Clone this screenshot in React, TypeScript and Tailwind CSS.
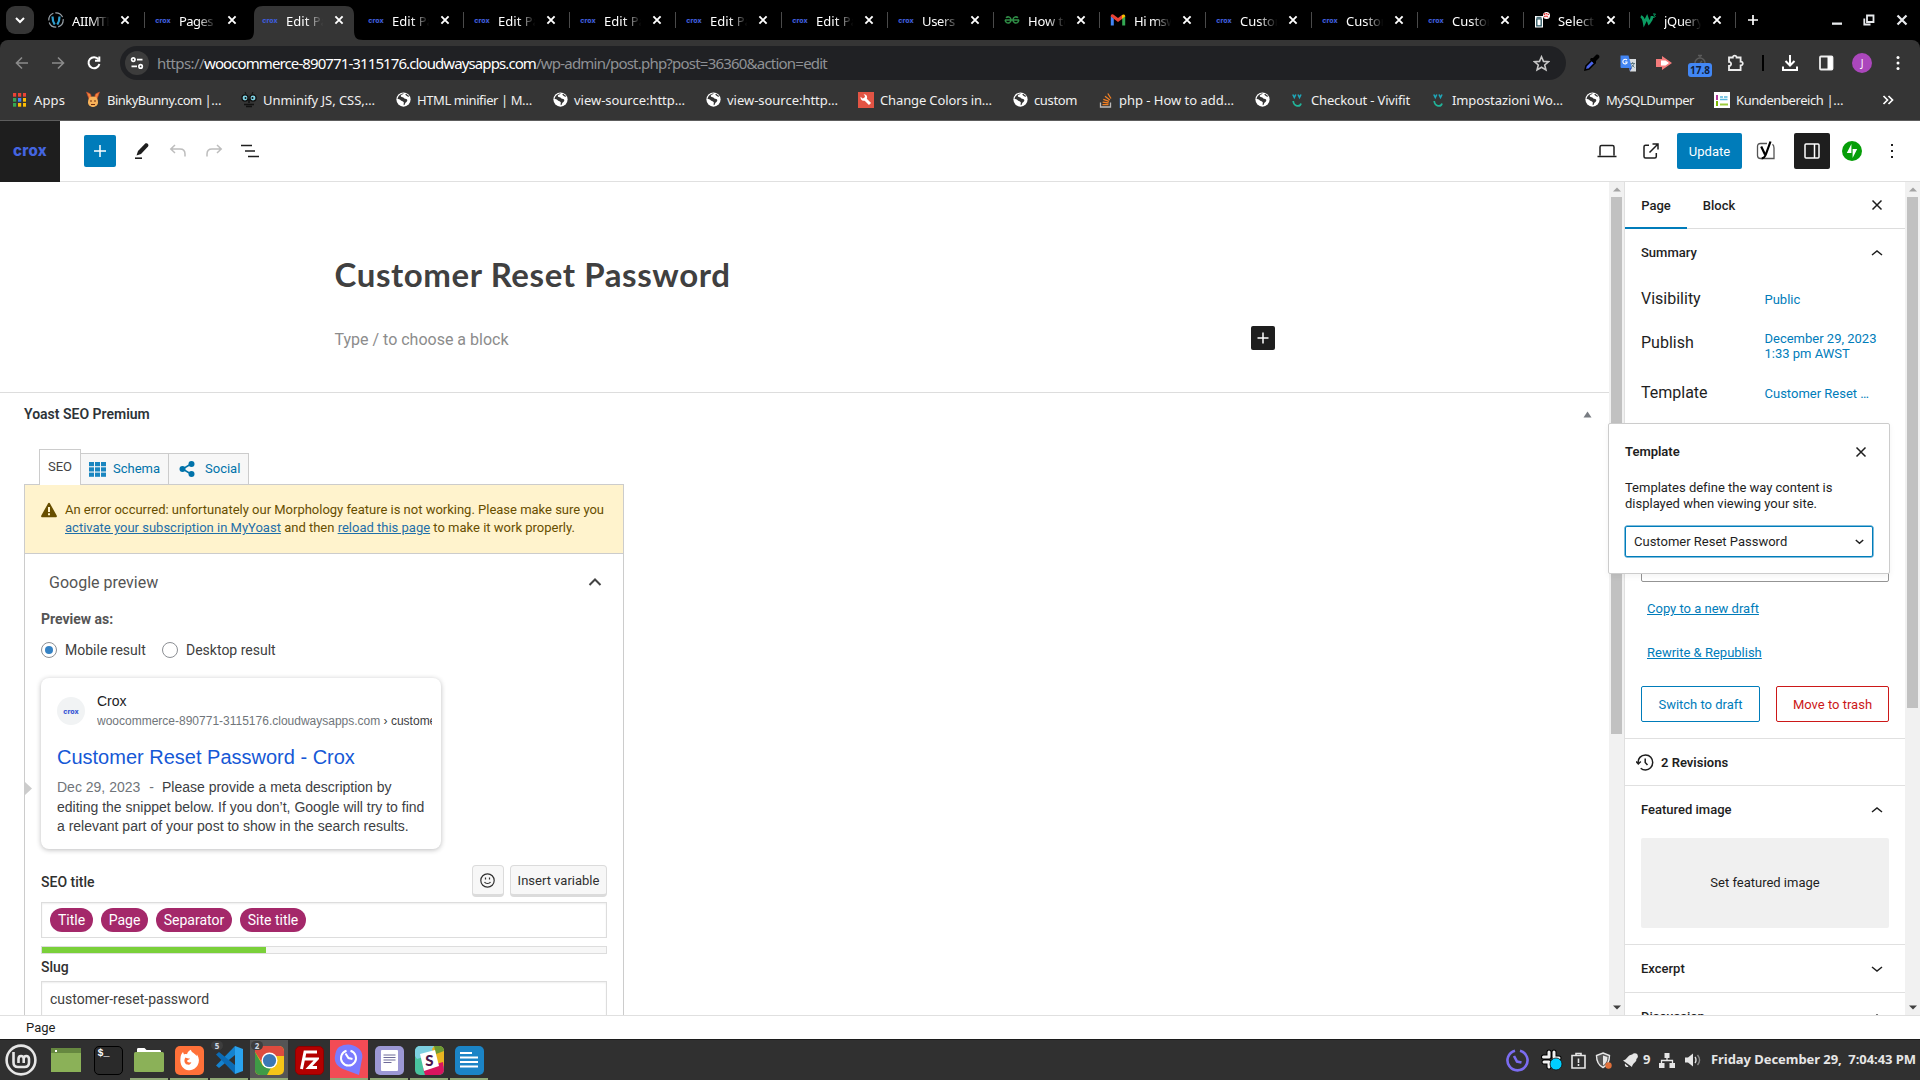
import { useLayoutEffect, useRef, useState } from 'react';
import type { ReactNode } from 'react';

const UI = "font-['Noto_Sans',sans-serif]";

/* Spreads a line of text over a given width by adjusting its letter spacing. */
function Fit({ w, className = '', children }: { w: number; className?: string; children: string }) {
  const ref = useRef<HTMLSpanElement>(null);
  const [ls, setLs] = useState(0);
  useLayoutEffect(() => {
    const measure = () => {
      const el = ref.current;
      if (!el) return;
      el.style.letterSpacing = '0px';
      const v = (w - el.getBoundingClientRect().width) / children.length;
      el.style.letterSpacing = `${v}px`;
      setLs(v);
    };
    measure();
    document.fonts?.ready.then(measure);
  }, [w, children]);
  return (
    <span ref={ref} className={`inline-block shrink-0 whitespace-pre ${className}`} style={{ letterSpacing: `${ls}px` }}>
      {children}
    </span>
  );
}

function Crox({ size = 'sm' }: { size?: 'sm' | 'lg' }) {
  if (size === 'lg')
    return <Fit w={34} className="font-['Inter',sans-serif] text-[15px] leading-none font-extrabold text-[#4465e0]">crox</Fit>;
  return (
    <span className="flex h-4 w-4 items-center justify-center">
      <Fit w={15.500} className="font-['Inter',sans-serif] text-[7px] leading-none font-extrabold text-[#3d5bd6]">crox</Fit>
    </span>
  );
}

function Globe() {
  return (
    <svg width="15" height="15" viewBox="0 0 16 16">
      <circle cx="8" cy="8" r="7.600" fill="#fff" />
      <path d="M8.600 1.600c-1 .8-2.800 1-3.400 2.200-.5 1.200.6 1.700 1.900 1.900 1.400.2 1.200 1.300 2.700 1.500 1.500.2 2.500.8 2.200 2.200-.3 1.500-2 1.700-2.400 3-.2.800-.5 1.500-1.200 1.700-.8-1.100.5-2.500-.3-3.500C7.300 9.700 5.600 9.900 4.700 8.600 4 7.600 2.600 7.500 1.700 7.400 2 4.300 5 1.400 8.600 1.600z" fill="#353535" />
      <path d="M10.500 2.200c.5 1.500 1.700 1.300 3 2.600" stroke="#353535" strokeWidth="1.300" fill="none" />
    </svg>
  );
}

function Close({ className = '' }: { className?: string }) {
  return (
    <svg className={className} width="14" height="14" viewBox="0 0 14 14" stroke="currentColor" strokeWidth="1.900" fill="none">
      <path d="M3.400 3.400l7.200 7.200M10.600 3.400l-7.200 7.200" />
    </svg>
  );
}

function HeadFav() {
  return (
    <svg width="16" height="16" viewBox="0 0 16 16" fill="none">
      <circle cx="8" cy="8" r="7.200" stroke="#9aa3aa" strokeWidth="1.200" strokeDasharray="9 2" />
      <path d="M4.500 4.500c0 3 .3 5.500 2.200 8M11.500 4.500c0 3-.3 5.500-2.200 8" stroke="#2f9fd0" strokeWidth="2.200" />
    </svg>
  );
}
function GeeksFav() {
  return (
    <svg width="16" height="16" viewBox="0 0 16 16" fill="none" stroke="#2f8d46" strokeWidth="1.500">
      <path d="M1 8h14M2 5.800C4 4 7 5 7 8s-3 3.800-4.800 2.200C1.400 9.500 1.200 8.600 1.400 8M14 5.800C12 4 9 5 9 8s3 3.800 4.800 2.200c.8-.7 1-1.600.8-2.200" />
    </svg>
  );
}
function GmailFav() {
  return (
    <svg width="16" height="16" viewBox="0 0 16 16">
      <path d="M.8 4v9.500h3V6.500z" fill="#4285f4" />
      <path d="M15.200 4v9.500h-3V6.500z" fill="#34a853" />
      <path d="M.8 4.300C.8 2.300 2.800 1.900 4 2.900L8 6l4-3.100v4L8 10 .8 4.600z" fill="#ea4335" />
      <path d="M12 2.900c1.300-1 3.200-.5 3.200 1.400v.3L12 7z" fill="#fbbc04" />
    </svg>
  );
}
function SelectFav() {
  return (
    <svg width="17" height="16" viewBox="0 0 17 16">
      <path d="M1 4h8v11.500H1z" fill="#fff" />
      <path d="M2.800 6.800h4.400v7H2.800z" fill="#fff" stroke="#26525e" strokeWidth="1.300" />
      <path d="M2.500 5.300h5" stroke="#26525e" />
      <circle cx="12.500" cy="3.500" r="3.500" fill="#fff" />
      <path d="M10 2.800c1-1.800 3.800-1.500 4.600.2M10.400 5c1-1.400 3.200-1 3.600.5" stroke="#e23030" strokeWidth="1.400" strokeDasharray="1.500 .5" fill="none" />
    </svg>
  );
}
function W3Fav() {
  return (
    <svg width="17" height="16" viewBox="0 0 17 16" fill="none" stroke="#0b9c62">
      <path d="M.8 4.500c2 .5 3 3.500 3.500 6.500L7 5.500l2 5.500c2-2 3-4.500 3.200-7" strokeWidth="2.800" />
      <path d="M13 2h2.500l-1.300 1.600c1.500 0 1.500 2-1.200 1.800" strokeWidth="1" />
    </svg>
  );
}

type Tab = { fav: ReactNode; title: string; w: number; active?: boolean; nosep?: boolean; wide?: boolean };
const tabs: Tab[] = [
  { fav: <HeadFav />, title: 'AIIMTE', w: 41, wide: true },
  { fav: <Crox />, title: 'Pages', w: 34, nosep: true, wide: true },
  { fav: <Crox />, title: 'Edit Pa', w: 42, active: true, nosep: true },
  { fav: <Crox />, title: 'Edit Pa', w: 42 },
  { fav: <Crox />, title: 'Edit Pa', w: 42 },
  { fav: <Crox />, title: 'Edit Pa', w: 42 },
  { fav: <Crox />, title: 'Edit Pa', w: 42 },
  { fav: <Crox />, title: 'Edit Pa', w: 42 },
  { fav: <Crox />, title: 'Users', w: 33 },
  { fav: <GeeksFav />, title: 'How to', w: 43 },
  { fav: <GmailFav />, title: 'Hi msw', w: 42 },
  { fav: <Crox />, title: 'Custom', w: 47 },
  { fav: <Crox />, title: 'Custom', w: 47 },
  { fav: <Crox />, title: 'Custom', w: 47 },
  { fav: <SelectFav />, title: 'Select', w: 36 },
  { fav: <W3Fav />, title: 'jQuery', w: 39 },
];

function TabStrip() {
  return (
    <div className="flex h-10 items-stretch bg-black text-white">
      <div className="flex w-[38px] items-center pt-0 pl-[6px]">
        <div className="flex h-7 w-7 items-center justify-center rounded-[9px] bg-[#353535]">
          <svg width="12" height="12" viewBox="0 0 12 12" fill="none" stroke="#fff" strokeWidth="2"><path d="M2 4l4 4 4-4" /></svg>
        </div>
      </div>
      {tabs.map((t, i) => (
        <div key={i} className={`relative flex shrink-0 items-center pl-[10px] ${t.wide ? 'w-[107px]' : 'w-[106px]'}`}>
          {t.active && (
            <svg className="absolute top-[6px] -left-[7px]" width="118" height="34" viewBox="0 0 118 34">
              <path d="M0 34C7 34 9 31 9 24V9C9 3 12 0 18 0H100C106 0 109 3 109 9V24C109 31 111 34 118 34Z" fill="#353535" />
            </svg>
          )}
          <div className="relative flex w-[24px] items-center">{t.fav}</div>
          <div className="relative w-[38px] overflow-hidden [mask-image:linear-gradient(to_right,#000_50%,transparent_98%)]">
            <Fit w={t.w} className="text-[13px] leading-5">{t.title}</Fit>
          </div>
          <Close className="relative ml-2" />
          {!t.nosep && <span className="absolute top-3 right-0 h-4 w-px bg-[#4a4a4a]" />}
        </div>
      ))}
      <div className="flex flex-1 items-center pl-[11px]">
        <svg width="12" height="12" viewBox="0 0 12 12" stroke="#fff" strokeWidth="1.700"><path d="M6 1v10M1 6h10" /></svg>
      </div>
      <div className="flex items-center pr-[10px] text-[#e8eaed]">
        <svg className="mr-5" width="12" height="12" viewBox="0 0 12 12"><path d="M1 8.500h10v2.300H1z" fill="currentColor" /></svg>
        <svg className="mr-[19px]" width="12" height="12" viewBox="0 0 12 12" fill="none" stroke="currentColor" strokeWidth="1.800"><path d="M4 1.500h6.500V8H4zM1.300 4.500v6H7.500" /></svg>
        <svg width="16" height="16" viewBox="0 0 16 16" stroke="currentColor" strokeWidth="2.200"><path d="M3.500 3.500l9 9M12.500 3.500l-9 9" /></svg>
      </div>
    </div>
  );
}

function Slot({ children }: { children: ReactNode }) {
  return <div className="flex w-9 shrink-0 items-center justify-center">{children}</div>;
}

function Toolbar() {
  return (
    <div className="flex h-[46px] items-center rounded-t-[8px] bg-[#353535] text-white">
      <div className="flex w-[120px] pl-1">
        <Slot><svg width="16" height="16" viewBox="0 0 16 16" fill="none" stroke="#8b8b8b" strokeWidth="1.600"><path d="M14 8H3M8 2.500L2.500 8 8 13.500" /></svg></Slot>
        <Slot><svg width="16" height="16" viewBox="0 0 16 16" fill="none" stroke="#8b8b8b" strokeWidth="1.600"><path d="M2 8h11M8 2.500L13.500 8 8 13.500" /></svg></Slot>
        <Slot><svg width="16" height="16" viewBox="0 0 16 16" fill="none" stroke="#fff" strokeWidth="2"><path d="M12.500 4.500A5.500 5.500 0 1 0 13.400 9" /><path d="M13.300 1.500v4.300H9" /></svg></Slot>
      </div>
      <div className="flex h-[34px] w-[1446px] items-center rounded-full bg-[#202124] pl-[5px]">
        <div className="mr-2 flex h-6 w-6 items-center justify-center rounded-full bg-[#3c3c3c]">
          <svg width="14" height="14" viewBox="0 0 14 14" fill="none" stroke="#fff" strokeWidth="1.700"><circle cx="3.300" cy="3.600" r="1.700" /><path d="M7 3.600h5.500M1.500 10.400H7" /><circle cx="10.600" cy="10.400" r="1.700" /></svg>
        </div>
        <div className="text-[15px] leading-5 text-[#8f9195]">
          <Fit w={47}>https://</Fit>
          <Fit w={332} className="text-white">woocommerce-890771-3115176.cloudwaysapps.com</Fit>
          <Fit w={291}>/wp-admin/post.php?post=36360&action=edit</Fit>
        </div>
        <svg className="mr-4 ml-auto" width="17" height="17" viewBox="0 0 17 17" fill="none" stroke="#c7c7c7" strokeWidth="1.600"><path d="M8.500 1.800l2 4.600 5 .4-3.800 3.200 1.200 4.900-4.400-2.700-4.400 2.700 1.200-4.900L1.500 6.800l5-.4z" /></svg>
      </div>
      <div className="flex pl-[8px]">
        <Slot>
          <svg width="18" height="18" viewBox="0 0 18 18"><path d="M2 16l1-4 6-6 3 3-6 6z" fill="#4a63e6" stroke="#000" strokeWidth="1.500" /><path d="M8 4l2 0 3-3c2-1.500 4.500 1 3 3l-3 3v2l-1.500 1L7 5.500z" fill="#000" /></svg>
        </Slot>
        <Slot>
          <svg width="17" height="17" viewBox="0 0 17 17"><path d="M7 4h9v12.500h-6z" fill="#d8dce0" /><path d="M.5.500h8L12 13H1.500a1 1 0 0 1-1-1z" fill="#4285f4" /><path d="M9 13h3l-2 3z" fill="#2a56c6" /><path d="M7 5.200A2.300 2.300 0 1 0 7 8V7H5" fill="none" stroke="#fff" strokeWidth="1.100" /><path d="M10.500 8.500H15M12.700 7v1.500M14 8.500c-.5 2-1.500 3-3 4M11.500 9.500l3 3" stroke="#5f7a86" fill="none" /></svg>
        </Slot>
        <Slot>
          <svg width="16" height="14" viewBox="0 0 16 14"><path d="M0 3h6V0l10 7-10 7v-3H0z" fill="#f37b7b" /><path d="M5 4.500h4.500L13 7l-3.500 2.500H5z" fill="#fff" /></svg>
        </Slot>
        <Slot>
          <div className="relative h-[18px] w-6">
            <svg className="mx-auto" width="14" height="14" viewBox="0 0 14 14" fill="none" stroke="#5b5b5b" strokeWidth="1.500"><path d="M5 1.500h4M7 1.500v2" /><circle cx="7" cy="9" r="5" /><path d="M7 9l2-2" /></svg>
            <span className="absolute top-[9px] left-0 flex h-[14px] w-6 items-center justify-center rounded-[3px] bg-[#4287f5]"><Fit w={20} className="text-[10px] leading-none font-bold text-[#10203c]">17.8</Fit></span>
          </div>
        </Slot>
        <Slot>
          <svg width="18" height="18" viewBox="0 0 18 18" fill="none" stroke="#eee" strokeWidth="1.800"><path d="M2 3.500h3.800c-.2-2.500 4-2.500 3.800 0h4v4.200c2.900-.2 2.900 3.900 0 3.700v4.600H2v-4c2.800.1 2.800-4.200 0-4.100z" /></svg>
        </Slot>
        <div className="flex w-[18px] items-center justify-center"><span className="h-4 w-[2px] bg-black" /></div>
        <Slot>
          <svg width="18" height="18" viewBox="0 0 18 18" fill="none" stroke="#fff" strokeWidth="2"><path d="M9 1v10M4.500 7L9 11.500 13.500 7M2 12.500V16h14v-3.500" /></svg>
        </Slot>
        <Slot>
          <svg width="16" height="16" viewBox="0 0 16 16" fill="none"><rect x="2" y="1.500" width="12.500" height="13" rx="1" stroke="#eee" strokeWidth="1.800" /><path d="M9.500 1.500h5v13h-5z" fill="#fff" /></svg>
        </Slot>
        <Slot><div className="flex h-5 w-5 items-center justify-center rounded-full bg-[#ab47bc] text-[10px] text-white">J</div></Slot>
        <Slot><svg width="4" height="16" viewBox="0 0 4 16" fill="#fff"><circle cx="2" cy="2.500" r="1.500" /><circle cx="2" cy="8" r="1.500" /><circle cx="2" cy="13.500" r="1.500" /></svg></Slot>
      </div>
    </div>
  );
}

const AppsIcon = (
  <svg width="13" height="14" viewBox="0 0 13 14">
    {['#ea4335', '#ea4335', '#ea4335', '#34a853', '#4285f4', '#fbbc04', '#34a853', '#fbbc04', '#fbbc04'].map((c, i) => (
      <rect key={i} x={(i % 3) * 5} y={Math.floor(i / 3) * 5} width="3.200" height="3.700" fill={c} />
    ))}
  </svg>
);
const Bunny = (
  <svg width="16" height="17" viewBox="0 0 16 17">
    <path d="M1.500 1l4 2 1.500 5H4zM14.500 1l-4 2L9 8h3z" fill="#f4823c" stroke="#c34a2a" strokeWidth=".7" />
    <path d="M8 5.500c4 0 5 3 5 6s-3 4.500-5 4.500-5-1.500-5-4.500 1-6 5-6z" fill="#f7b25a" />
    <path d="M5 10h2M9 10h2M6 13.500h4" stroke="#6d2d10" strokeWidth="1.200" />
  </svg>
);
const Unmin = (
  <svg width="16" height="17" viewBox="0 0 16 17">
    <path d="M4 1l1 2M12 1l-1 2" stroke="#111" />
    <circle cx="4" cy="7" r="3.700" fill="#111" /><circle cx="12" cy="7" r="3.700" fill="#111" />
    <circle cx="4" cy="7" r="2.400" fill="#7fd3e4" /><circle cx="12" cy="7" r="2.400" fill="#7fd3e4" />
    <circle cx="4.500" cy="7" r="1" fill="#111" /><circle cx="11.500" cy="7" r="1" fill="#111" />
    <path d="M8 8v4M3 13.500h10M5 15.500h6" stroke="#111" strokeWidth="1.600" />
  </svg>
);
const Wrench = (
  <svg width="16" height="16" viewBox="0 0 16 16"><path d="M0 0h16v16H0z" fill="#e25444" /><path d="M6 6l6 6" stroke="#fff" strokeWidth="3" /><path d="M2.600 4.800a3.300 3.300 0 1 0 3-2.600L7 4 6.600 6 4.500 6.500z" fill="#fff" /></svg>
);
const Stack = (
  <svg width="14" height="16" viewBox="0 0 14 16" fill="none"><path d="M1.500 10.500V15h10v-4.500" stroke="#bcbbbb" strokeWidth="1.300" /><path d="M3.500 12.700h6M3.600 10.200l6 .8M4.300 7.300l5.700 2M6 4.200l4.800 3.700M8.800 1.500l3.200 5" stroke="#f48024" strokeWidth="1.300" /></svg>
);
const Vivi = (
  <svg width="11" height="14" viewBox="0 0 11 14" fill="none"><path d="M.8 1.500l1.500 3 1.500-3M6 1.500l1.500 3 1.500-3" stroke="#1fa6b8" strokeWidth="1.600" /><path d="M1.200 8c.6 6 7 6 7.800 2.500" stroke="#21b59a" strokeWidth="1.700" /></svg>
);
const Kunden = (
  <svg width="16" height="16" viewBox="0 0 16 16"><path d="M0 0h16v16H0z" fill="#fff" /><path d="M2 3h2v5H2z" fill="#b5399b" /><path d="M2 9h2v5H2z" fill="#7ab800" /><path d="M6 5h3M10 5h3.500M6 7.500h7.500" stroke="#58b8dd" strokeWidth="1.500" /><path d="M6 12.500h8" stroke="#9ccb3b" strokeWidth="2" /></svg>
);

type Bm = { icon: ReactNode; cls: string; iw: string; text?: string; w?: number };
const bookmarks: Bm[] = [
  { icon: AppsIcon, cls: 'w-[72px]', iw: 'w-[21px]', text: 'Apps', w: 31 },
  { icon: Bunny, cls: 'w-[156px]', iw: 'w-[22px]', text: 'BinkyBunny.com |…', w: 114 },
  { icon: Unmin, cls: 'w-[155px]', iw: 'w-[22px]', text: 'Unminify JS, CSS,…', w: 112 },
  { icon: <Globe />, cls: 'w-[157px]', iw: 'w-[21px]', text: 'HTML minifier | M…', w: 115 },
  { icon: <Globe />, cls: 'w-[153px]', iw: 'w-[21px]', text: 'view-source:http…', w: 111 },
  { icon: <Globe />, cls: 'w-[152px]', iw: 'w-[21px]', text: 'view-source:http…', w: 111 },
  { icon: Wrench, cls: 'w-[155px]', iw: 'w-[22px]', text: 'Change Colors in…', w: 112 },
  { icon: <Globe />, cls: 'w-[86px]', iw: 'w-[21px]', text: 'custom', w: 43 },
  { icon: Stack, cls: 'w-[156px]', iw: 'w-[20px]', text: 'php - How to add…', w: 115 },
  { icon: <Globe />, cls: 'w-[37px]', iw: 'w-[21px]' },
  { icon: Vivi, cls: 'w-[141px]', iw: 'w-[19px]', text: 'Checkout - Vivifit', w: 99 },
  { icon: Vivi, cls: 'w-[152px]', iw: 'w-[19px]', text: 'Impostazioni Wo…', w: 111 },
  { icon: <Globe />, cls: 'w-[129px]', iw: 'w-[21px]', text: 'MySQLDumper', w: 88 },
  { icon: Kunden, cls: 'w-[168px]', iw: 'w-[22px]', text: 'Kundenbereich |…', w: 107 },
];

function Bookmarks() {
  return (
    <div className="flex h-[35px] items-center border-b border-[#5d5d5d] bg-[#353535] pb-[7px] pl-[13px] text-[#f0f0f0]">
      {bookmarks.map((b, i) => (
        <div key={i} className={`flex shrink-0 items-center ${b.cls}`}>
          <span className={`shrink-0 ${b.iw}`}>{b.icon}</span>
          {b.text && <Fit w={b.w!} className="text-[13px] leading-5">{b.text}</Fit>}
        </div>
      ))}
      <svg className="shrink-0" width="12" height="12" viewBox="0 0 12 12" fill="none" stroke="#fff" strokeWidth="1.700"><path d="M1.500 2l4 4-4 4M6.500 2l4 4-4 4" /></svg>
    </div>
  );
}

function EditorHeader() {
  return (
    <div className="flex h-[61px] items-stretch bg-white text-[#1e1e1e]">
      <div className="flex w-[60px] items-center justify-center bg-[#1e1e1e] pb-[2px]"><Crox size="lg" /></div>
      <div className="flex flex-1 items-center border-b border-[#e0e0e0] pl-6">
        <div className="flex h-8 w-8 items-center justify-center rounded-[2px] bg-[#007cba]">
          <svg width="14" height="14" viewBox="0 0 14 14" stroke="#fff" strokeWidth="1.500"><path d="M7 1v12M1 7h12" /></svg>
        </div>
        <div className="ml-2 flex">
          <Slot><svg width="16" height="18" viewBox="0 0 16 18"><path d="M2.500 13.500L4 9l7-7.300c1.500-1.400 4.500.8 3 2.800L7 12z" fill="#1e1e1e" /><path d="M1 16.200h7" stroke="#1e1e1e" strokeWidth="1.600" /></svg></Slot>
          <Slot><svg width="18" height="14" viewBox="0 0 18 14" fill="none" stroke="#bdbdbd" strokeWidth="1.500"><path d="M6 1L1.800 5 6 9M2 5h9c3.500 0 5 2 5 5v2.500" /></svg></Slot>
          <Slot><svg width="18" height="14" viewBox="0 0 18 14" fill="none" stroke="#bdbdbd" strokeWidth="1.500"><path d="M12 1l4.200 4L12 9M16 5H7c-3.500 0-5 2-5 5v2.500" /></svg></Slot>
          <Slot><svg width="18" height="14" viewBox="0 0 18 14" stroke="#1e1e1e" strokeWidth="1.600"><path d="M0 1.500h11M4 7h10M7 12.500h11" /></svg></Slot>
        </div>
        <div className="ml-auto flex items-center">
          <svg width="20" height="14" viewBox="0 0 20 14" fill="none" stroke="#1e1e1e" strokeWidth="1.500"><path d="M3 11.500V3c0-1 .5-1.500 1.500-1.500h11c1 0 1.500.5 1.500 1.500v8.500M.5 12.400h19" /></svg>
          <svg className="ml-[26px]" width="16" height="16" viewBox="0 0 16 16" fill="none" stroke="#1e1e1e" strokeWidth="1.500"><path d="M9.500 1H15v5.500M15 1L6.500 9.500M6 2.200H2.500C1.500 2.200 1 2.700 1 3.700v9.800c0 1 .5 1.500 1.500 1.500h9.300c1 0 1.500-.5 1.500-1.500V10" /></svg>
          <div className="ml-[18px] flex h-9 w-[65px] items-center justify-center rounded-[2px] bg-[#007cba] pt-px font-['Roboto',sans-serif] text-[13px] text-white">Update</div>
          <svg className="ml-[14px]" width="20" height="20" viewBox="0 0 20 20" fill="none"><path d="M11 2.500H4.500c-2 0-3 1-3 3v9c0 2 1 3 3 3H18V7c0-2-.5-3-1.500-3.800" stroke="#555" strokeWidth="1.300" /><path d="M5.200 5.500L9 13.500M14.500.5L10 13c-.9 2.600-2 4.300-4.300 4.300" stroke="#000" strokeWidth="2.200" /></svg>
          <div className="ml-[18px] flex h-9 w-9 items-center justify-center rounded-[2px] bg-[#1e1e1e]">
            <svg width="16" height="16" viewBox="0 0 16 16" fill="none" stroke="#fff" strokeWidth="1.500"><rect x="1" y="1" width="14" height="14" rx="1" /><path d="M10.500 1v14" /></svg>
          </div>
          <svg className="ml-3" width="20" height="20" viewBox="0 0 20 20"><circle cx="10" cy="10" r="10" fill="#069e08" /><path d="M9.400 3v9H4.800zM10.600 17V8h4.600z" fill="#fff" /></svg>
          <svg className="mr-[26px] ml-[28px]" width="4" height="16" viewBox="0 0 4 16" fill="#1e1e1e"><path d="M1 1h2v2H1zM1 7h2v2H1zM1 13h2v2H1z" /></svg>
        </div>
      </div>
    </div>
  );
}

function Scrollbar({ thumb }: { thumb: string }) {
  return (
    <div className="flex w-[15px] shrink-0 flex-col items-center bg-[#f1f1f1]">
      <div className="flex h-[15px] items-center"><svg width="8" height="5" viewBox="0 0 8 5"><path d="M4 .5L8 4.500H0z" fill="#a3a3a3" /></svg></div>
      <div className={`w-[11px] bg-[#c1c1c1] ${thumb}`} />
      <div className="mt-auto flex h-[15px] items-center"><svg width="8" height="5" viewBox="0 0 8 5"><path d="M4 4.500L8 .5H0z" fill="#404040" /></svg></div>
    </div>
  );
}

const pills = [
  { t: 'Title', c: 'w-[43px]' },
  { t: 'Page', c: 'w-[47px]' },
  { t: 'Separator', c: 'w-[76px]' },
  { t: 'Site title', c: 'w-[66px]' },
];

function YoastBox() {
  return (
    <div className="flex flex-1 flex-col overflow-hidden border-t border-[#ddd] pl-6">
      <div className="flex h-[43px] shrink-0 items-center justify-between pr-[17px]">
        <span className="text-[14px] font-semibold text-[#2c3338]">Yoast SEO Premium</span>
        <svg width="9" height="7" viewBox="0 0 9 7"><path d="M4.500.500L8.500 6.500H.5z" fill="#787c82" /></svg>
      </div>
      <div className="mt-[13px] flex h-[35px] shrink-0 items-end pl-[15px] text-[13px]">
        <div className="relative z-10 -mb-px flex h-[36px] w-[42px] items-center justify-center border border-b-0 border-[#ccc] bg-white pb-[2px] text-[#444]">SEO</div>
        <div className="-ml-px flex h-[31px] w-[89px] items-center border border-b-0 border-[#ccc] bg-[#f7f7f7] pl-2 text-[#0073aa]">
          <svg className="mr-[7px]" width="17" height="15" viewBox="0 0 17 15" fill="#1a86c0">{[0, 1, 2].map((r) => [0, 1, 2].map((c) => <rect key={`${r}${c}`} x={c * 6} y={r * 5.300} width="5" height="4.200" />))}</svg>
          Schema
        </div>
        <div className="-ml-px flex h-[31px] w-[81px] items-center border border-b-0 border-[#ccc] bg-[#f7f7f7] pl-[10px] text-[#0073aa]">
          <svg className="mr-[10px]" width="16" height="16" viewBox="0 0 16 16" fill="#0073aa"><circle cx="3.500" cy="8" r="3" /><circle cx="12.500" cy="3" r="3" /><circle cx="12.500" cy="13" r="3" /><path d="M12 3L3.500 8l8.500 5" fill="none" stroke="#0073aa" strokeWidth="1.500" /></svg>
          Social
        </div>
      </div>
      <div className="flex w-[600px] flex-1 flex-col overflow-hidden border border-b-0 border-[#ccc]">
        <div className="flex h-[69px] shrink-0 border-b border-[#ccc] bg-[#fff3cd] pt-[16px] pl-4 text-[13px] leading-[18px] text-[#674e00]">
          <svg className="mt-[1px] mr-2" width="16" height="16" viewBox="0 0 16 16"><path d="M8 .8c.5 0 .8.300 1 .7l6.700 12c.5 1 0 1.700-1 1.700H1.300c-1 0-1.500-.7-1-1.700L7 1.500c.2-.4.5-.7 1-.7z" fill="#674e00" /><path d="M7 5h2v5H7zM7 11.200h2v2H7z" fill="#fff3cd" /></svg>
          <div>
            <Fit w={539}>An error occurred: unfortunately our Morphology feature is not working. Please make sure you</Fit>
            <div><span className="text-[#1f6fa8] underline">activate your subscription in MyYoast</span> and then <span className="text-[#1f6fa8] underline">reload this page</span> to make it work properly.</div>
          </div>
        </div>
        <div className="flex h-[57px] shrink-0 items-center justify-between pr-[21px] pl-6 text-[16px] text-[#555]">
          Google preview
          <svg className="-mt-px" width="14" height="10" viewBox="0 0 14 10" fill="none" stroke="#444" strokeWidth="2"><path d="M1.500 8L7 2.500 12.500 8" /></svg>
        </div>
        <div className="flex flex-1 flex-col pr-4 pl-4 text-[14px]">
          <div className="h-4 shrink-0 leading-4 font-bold text-[#555]">Preview as:</div>
          <div className="mt-[15px] flex h-4 shrink-0 items-center text-[#404040]">
            <span className="flex h-4 w-4 items-center justify-center rounded-full border border-[#8c8f94]"><span className="h-2 w-2 rounded-full bg-[#3582c4]" /></span>
            <span className="ml-2 w-[97px]">Mobile result</span>
            <span className="h-4 w-4 rounded-full border border-[#8c8f94]" />
            <span className="ml-2">Desktop result</span>
          </div>
          <div className="relative mt-5 h-[171px] w-[400px] shrink-0 rounded-[8px] bg-white px-4 font-['Liberation_Sans',Arial,sans-serif] shadow-[0_1px_5px_rgba(32,33,36,0.3)]">
            <svg className="absolute top-[103px] -left-[17px]" width="8" height="15" viewBox="0 0 8 15"><path d="M0 0l8 7.500L0 15z" fill="#ccc" /></svg>
            <div className="flex pt-[14px]">
              <span className="mt-[5px] flex h-7 w-7 shrink-0 items-center justify-center rounded-full bg-[#f1f3f4]"><Crox /></span>
              <div className="ml-3">
                <div className="h-[19px] text-[14px] leading-[19px] text-[#202124]">Crox</div>
                <div className="mt-[1px] w-[335px] overflow-hidden text-[12px] leading-[18px] whitespace-nowrap text-[#70757a]">woocommerce-890771-3115176.cloudwaysapps.com<span className="text-[#3c4043]"> › customer-reset-password</span></div>
              </div>
            </div>
            <div className="mt-[14px] h-[26px] text-[20px] leading-[26px] text-[#1558d6]">Customer Reset Password - Crox</div>
            <div className="mt-[8px] text-[14px] leading-[19.600px] whitespace-nowrap text-[#3c4043]">
              <div><span className="text-[#70757a]">Dec 29, 2023</span><span className="mr-[8px] ml-[9px] text-[#70757a]">-</span>Please provide a meta description by</div>
              <div>editing the snippet below. If you don’t, Google will try to find</div>
              <div>a relevant part of your post to show in the search results.</div>
            </div>
          </div>
          <div className="mt-4 flex h-8 shrink-0 items-center">
            <span className="mt-[2px] mr-auto font-medium text-[#303030]">SEO title</span>
            <span className="mr-[6px] flex h-8 w-8 items-center justify-center rounded-[4px] border border-b-[3px] border-[#dbdbdb] bg-[#f7f7f7]">
              <svg className="mr-px" width="15" height="15" viewBox="0 0 15 15" fill="none" stroke="#303030" strokeWidth="1.200"><circle cx="7.500" cy="7.500" r="6.700" /><path d="M4.500 9c1.200 2 4.800 2 6 0M5.500 4.500v2M9.500 4.500v2" /></svg>
            </span>
            <span className="flex h-8 w-[97px] items-center justify-center rounded-[4px] border border-b-[3px] border-[#dbdbdb] bg-[#f7f7f7] pt-px text-[13px] text-[#303030]">Insert variable</span>
          </div>
          <div className="mt-[5px] flex h-9 shrink-0 items-center gap-2 border border-[#ddd] pl-2 shadow-[inset_0_1px_2px_rgba(0,0,0,0.07)]">
            {pills.map((p) => (
              <span key={p.t} className={`flex h-6 items-center justify-center rounded-full bg-[#a4286a] text-[14px] text-white ${p.c}`}>{p.t}</span>
            ))}
          </div>
          <div className="mt-2 h-2 shrink-0 border border-[#ddd] bg-[#f7f7f7]"><div className="h-full w-[224px] bg-[#7ad03a]" /></div>
          <div className="h-[27px] shrink-0 pt-[5px] leading-4 font-medium text-[#303030]">Slug</div>
          <div className="flex h-9 shrink-0 items-center border border-[#ddd] pl-2 text-[#404040] shadow-[inset_0_1px_2px_rgba(0,0,0,0.07)]">customer-reset-password</div>
        </div>
      </div>
    </div>
  );
}

function X({ size = 12 }: { size?: number }) {
  return <svg width={size} height={size} viewBox="0 0 12 12" fill="none" stroke="#1e1e1e" strokeWidth="1.500"><path d="M1.500 1.500l9 9M10.500 1.500l-9 9" /></svg>;
}
function Chev({ down }: { down?: boolean }) {
  return <svg width="12" height="8" viewBox="0 0 12 8" fill="none" stroke="#1e1e1e" strokeWidth="1.500"><path d={down ? 'M1 2l5 4 5-4' : 'M1 6l5-4 5 4'} /></svg>;
}

function PanelTitle({ title, down, cls }: { title: string; down?: boolean; cls: string }) {
  return (
    <div className={`flex shrink-0 items-center justify-between pr-[22px] pl-4 font-medium ${cls}`}>
      {title}
      <Chev down={down} />
    </div>
  );
}

function TemplatePopover() {
  return (
    <div className="absolute top-[241px] -left-[17px] z-20 h-[151px] w-[282px] rounded-[2px] border border-[#ccc] bg-white px-4 shadow-[0_2px_6px_rgba(0,0,0,0.05)]">
      <div className="mt-[18px] flex h-5 items-center justify-between pr-[6px] font-semibold">Template<X size={12} /></div>
      <div className="mt-[18px] leading-4">
        <Fit w={207} className="h-4">Templates define the way content is</Fit>
        <Fit w={192} className="h-4">displayed when viewing your site.</Fit>
      </div>
      <div className="mt-[14px] flex h-[31px] w-[248px] items-center justify-between rounded-[2px] border border-[#007cba] pr-[8px] pl-2 ring-[0.5px] ring-[#007cba]">
        Customer Reset Password
        <svg width="9" height="6" viewBox="0 0 9 6" fill="none" stroke="#1e1e1e" strokeWidth="1.500"><path d="M.8 1l3.700 3.300L8.200 1" /></svg>
      </div>
    </div>
  );
}

function Sidebar() {
  return (
    <div className="relative flex w-[281px] shrink-0 flex-col border-l border-[#e0e0e0] text-[13px] text-[#1e1e1e]">
      <TemplatePopover />
      <div className="flex h-full flex-col overflow-hidden">
        <div className="flex h-[47px] shrink-0 items-stretch border-b border-[#ddd] font-medium">
          <div className="-mb-px flex w-[62px] items-center justify-center border-b-2 border-[#007cba] pt-[2px]">Page</div>
          <div className="flex w-[64px] items-center justify-center pt-px">Block</div>
          <div className="mr-[22px] ml-auto flex items-center"><X /></div>
        </div>
        <PanelTitle title="Summary" cls="h-[48px]" />
        <div className="flex h-11 shrink-0 items-center pl-4"><span className="w-[123.500px] text-[16px]">Visibility</span><span className="pt-[2px] text-[#007cba]">Public</span></div>
        <div className="flex h-11 shrink-0 items-center pl-4"><span className="w-[123.500px] text-[16px]">Publish</span><span className="pt-[6px] leading-[15px] text-[#007cba]">December 29, 2023<br />1:33 pm AWST</span></div>
        <div className="mt-[6px] flex h-11 shrink-0 items-center pl-4"><span className="w-[123.500px] text-[16px]">Template</span><span className="pt-[2px] text-[#007cba]">Customer Reset …</span></div>
        <div className="mx-4 mt-[136px] h-[31px] w-[248px] shrink-0 rounded-[2px] border border-[#949494]" />
        <div className="mt-[17px] ml-[22px] h-5 shrink-0 leading-5 text-[#007cba] underline">Copy to a new draft</div>
        <div className="mt-6 ml-[22px] h-5 shrink-0 leading-5 text-[#007cba] underline">Rewrite &amp; Republish</div>
        <div className="mt-[23px] flex h-9 shrink-0 gap-4 px-4">
          <span className="flex w-[119px] items-center justify-center rounded-[2px] border border-[#007cba] pt-px text-[#007cba]">Switch to draft</span>
          <span className="flex w-[113px] items-center justify-center rounded-[2px] border border-[#cc1818] pt-px text-[#cc1818]">Move to trash</span>
        </div>
        <div className="mt-4 flex h-[47px] shrink-0 items-center border-t border-[#e0e0e0] pt-px pl-[11px] font-semibold">
          <svg className="mr-[7px]" width="18" height="17" viewBox="0 0 18 17" fill="none" stroke="#1e1e1e" strokeWidth="1.500"><path d="M2.200 9.500C1.500 4.500 5 1 9.500 1s7.200 3.500 7.200 7.500-3.200 7.500-7.200 7.500c-2 0-3.500-.6-4.800-1.800M0 7.500L2.300 10 4.800 7.500M9.200 4.500v4l2.300 2.500" /></svg>
          2 Revisions
        </div>
        <PanelTitle title="Featured image" cls="h-[48px] border-t border-[#e0e0e0]" />
        <div className="mx-4 mt-[5px] flex h-[90px] w-[248px] shrink-0 items-center justify-center rounded-[2px] bg-[#f0f0f0]">Set featured image</div>
        <PanelTitle title="Excerpt" down cls="mt-4 h-[48px] border-t border-[#e0e0e0]" />
        <PanelTitle title="Discussion" cls="h-[48px] border-t border-[#e0e0e0]" />
      </div>
    </div>
  );
}

function Editor() {
  return (
    <div className="flex h-[833px] bg-white font-['Roboto',sans-serif]">
      <div className="flex w-[1609px] shrink-0 flex-col">
        <div className="h-[210px] shrink-0 pt-[70px] pl-[334.500px]">
          <div className="h-11"><Fit w={396} className="font-['Lato',sans-serif] text-[33px] leading-[44px] font-bold text-[#404040]">Customer Reset Password</Fit></div>
          <div className="mt-[30px] flex h-6 w-[940px] items-center justify-between">
            <Fit w={174} className="pt-[4px] text-[16px] text-[#8c8c8c]">Type / to choose a block</Fit>
            <span className="flex h-6 w-6 items-center justify-center rounded-[2px] bg-[#1e1e1e]"><svg width="12" height="12" viewBox="0 0 12 12" stroke="#fff" strokeWidth="1.500"><path d="M6 .500v11M.5 6h11" /></svg></span>
          </div>
        </div>
        <YoastBox />
      </div>
      <Scrollbar thumb="h-[537px]" />
      <Sidebar />
      <Scrollbar thumb="h-[511px]" />
    </div>
  );
}

type Task = { icon: ReactNode; bar?: boolean; bg?: string; badge?: string };
function Tile({ children, cls }: { children?: ReactNode; cls: string }) {
  return <div className={`flex h-[29px] w-[29px] items-center justify-center rounded-[5px] ${cls}`}>{children}</div>;
}
const tasks: Task[] = [
  { icon: <svg width="30" height="24" viewBox="0 0 30 24"><path d="M0 0h30v24H0z" fill="#8bb158" /><path d="M0 0h30v5H0z" fill="#668840" /><path d="M4 2h2v2H4z" fill="#fff" /></svg> },
  { icon: <div className="h-[29px] w-[29px] rounded-[5px] border border-black bg-[#2a2a2a] pt-px pl-[3px] font-['Liberation_Mono',monospace] text-[10px] leading-[12px] font-bold text-white">$_</div> },
  { bar: true, icon: <svg width="30" height="24" viewBox="0 0 30 24"><path d="M3 5V1.500C3 .5 3.500 0 4.500 0h6l2 2h13c1 0 1.500.5 1.500 1.500V6z" fill="#fff" /><rect y="4" width="30" height="20" rx="1.500" fill="#8bb158" /></svg> },
  { bar: true, icon: <Tile cls="bg-[#ff7139]"><svg width="22" height="22" viewBox="0 0 22 22"><path d="M2.500 9C2.500 6 4 4 5 3l1 2.500c1-.5 2-.5 3-.3C9.500 3 11 1.500 13 .8c0 2.500 4 3.700 5.500 6.200.4-.6.4-1.200.4-1.800C21.500 9 21.500 13 19.500 16.500 17 20.500 13 21.300 10.500 21.200 5.500 21 1.500 16 2.500 9z" fill="#fff" /><path d="M7.500 8.500c1.500.8 2.500 1 4.500 1-.6 1.500-2.600 1.300-3 2.600.4 1.400 2.500 1.900 4.300.8-.3 2.200-2.300 3.300-4.200 2.700-2.600-.8-3.600-4.300-1.600-7.100z" fill="#ff7139" /></svg></Tile> },
  { bar: true, badge: '5', icon: <svg width="28" height="28" viewBox="0 0 28 28"><path d="M20 0l8 3v22l-8 3z" fill="#2aa2ee" /><path d="M20 0v9L4 22l-3-2.500z" fill="#1583cf" /><path d="M20 28v-9L4 6 1 8.500z" fill="#0b6bb5" /></svg> },
  { bar: true, bg: 'bg-[#555]', badge: '2', icon: <svg width="29" height="29" viewBox="0 0 29 29"><rect width="29" height="29" rx="5" fill="#f5c518" /><path d="M5 0h19a5 5 0 0 1 5 5v5H14L8 18 0 6a5 5 0 0 1 5-6z" fill="#dd4b3e" /><path d="M0 6l8 14h9l-5 9H5a5 5 0 0 1-5-5z" fill="#3f9b46" /><circle cx="14.500" cy="14.500" r="8" fill="#fff" /><circle cx="14.500" cy="14.500" r="6.600" fill="#3c78b4" /></svg> },
  { icon: <Tile cls="border border-[#8d0000] bg-[#b30000]"><svg width="20" height="20" viewBox="0 0 20 20" fill="none" stroke="#fff" strokeWidth="3"><path d="M2.500 19L6 2h12M5 9h6M10 9h8l-8 8.500h8" /></svg></Tile> },
  { bar: true, bg: 'bg-[#f24b55]', icon: <svg width="30" height="32" viewBox="0 0 30 32"><path d="M5 3C12-1 19 0 24 4c4 3 5 7 4 11l-3 16-16-6C2 22 0 17 1 12c.5-4 1.500-7 4-9z" fill="#7b7bff" /><path d="M16.500 6.800A7.500 7.500 0 1 1 12.500 6.800" fill="none" stroke="#fff" strokeWidth="2" /><path d="M11.500 9.500l3 4.500 4 1" stroke="#fff" strokeWidth="2" fill="none" /></svg> },
  { bar: true, icon: <Tile cls="bg-[#9c98d4]"><svg width="17" height="21" viewBox="0 0 17 21"><rect width="17" height="21" rx="1" fill="#fff" /><path d="M2.500 5h12M2.500 7.500h12M2.500 10h12M2.500 12.500h8" stroke="#6d6a98" /></svg></Tile> },
  { bar: true, icon: <svg width="29" height="29" viewBox="0 0 29 29"><rect width="29" height="29" rx="5" fill="#49c39e" /><path d="M0 10V5a5 5 0 0 1 5-5h14l2 7L2 13z" fill="#7dcfe0" /><path d="M19 0h5a5 5 0 0 1 5 5v15l-7 3-5-20z" fill="#e8b420" /><path d="M8 22l20-6 1 8a5 5 0 0 1-5 5H10z" fill="#d9145f" /><path d="M19 0h5a5 5 0 0 1 5 5l-8 3z" fill="#6a9a34" /><path d="M5 8l15-4 4 16-15 5z" fill="#fff" /><text x="14.500" y="20" textAnchor="middle" fontFamily="Lato, sans-serif" fontWeight="900" fontSize="15" fill="#4a154b">S</text></svg> },
  { bar: true, icon: <Tile cls="bg-[#1b84c6]"><svg width="19" height="18" viewBox="0 0 19 18" stroke="#fff" strokeWidth="1.800"><path d="M0 2h12M0 6.500h18M0 11h18M0 15.500h18" /></svg></Tile> },
];

function Taskbar() {
  return (
    <div className="flex h-[41px] items-stretch border-t border-[#1c1c1c] bg-[#303030]">
      <div className="flex w-[46px] items-center pl-[5px]">
        <svg width="32" height="32" viewBox="0 0 32 32" fill="none" stroke="#e6e6e6" strokeWidth="2.600"><circle cx="16" cy="16" r="14.400" /><path d="M8.500 8v10.500c0 3 1.500 4.500 4.500 4.500h6.500c3 0 4.500-1.500 4.500-4.500V15c0-4-5.300-4-5.300 0v4M18.700 15c0-4-5.200-4-5.200 0v4" /></svg>
      </div>
      <div className="flex">
        {tasks.map((t, i) => (
          <div key={i} className={`relative mr-[2px] flex items-center justify-center ${i < 2 ? 'w-10' : 'w-[38px]'} ${t.bg ?? ''}`}>
            {t.icon}
            {t.bar && <span className="absolute bottom-0 left-0 h-[2px] w-full bg-[#8fa876]" />}
            {t.badge && <span className="absolute top-px left-[1px] flex h-[9px] w-3 items-center justify-center rounded-full bg-[#3d3d3d] text-[8px] leading-none font-bold text-[#cfd8e4]">{t.badge}</span>}
          </div>
        ))}
      </div>
      <div className="ml-auto flex items-center pr-[4px] text-[#e6e6e6]">
        <svg width="23" height="23" viewBox="0 0 23 23" fill="none" stroke="#7b6cf0" strokeWidth="2.600"><path d="M14 1.700A10 10 0 1 1 9 1.700M8 7l3 5.500 4.500 1" /></svg>
        <svg className="ml-3" width="22" height="22" viewBox="0 0 22 22"><g stroke="#000" strokeWidth="5" strokeLinecap="round"><path d="M8 3v5M2.500 8H8M13 3v5M18 9h-5M8 13v5M3 13h5" /></g><g stroke="#f0f0f0" strokeWidth="3" strokeLinecap="round"><path d="M8 3v5M2.500 8H8M13 3v5M18 9h-5M8 13v5M3 13h5" /></g><circle cx="15" cy="15" r="6" fill="#00cfff" stroke="#111" strokeWidth=".8" /></svg>
        <svg className="ml-2" width="15" height="17" viewBox="0 0 15 17" fill="none" stroke="#e6e6e6" strokeWidth="1.600"><path d="M1 3.500h13v12.500H1zM5 3.500V1.500h5v2M7.500 6.500v4.500M7.500 12v2" /></svg>
        <svg className="ml-[9px]" width="17" height="17" viewBox="0 0 17 17"><path d="M8 1l6.500 2.500c0 6-1.500 9.500-6.500 12C3 13 1.500 9.500 1.500 3.500z" fill="#555" stroke="#e6e6e6" strokeWidth="1.400" /><path d="M8 3.500l4.500 1.500c0 4-1.500 6.500-4.500 8.500z" fill="#e6e6e6" /><circle cx="13.500" cy="13.500" r="3.200" fill="#e0703a" /></svg>
        <svg className="ml-[11px]" width="15" height="15" viewBox="0 0 15 15" fill="#e6e6e6"><path d="M0 7.500C4 7 4.500 2 9 1.500l4.500 5C13 10 9.500 10 9 14z" /><circle cx="11.800" cy="3.200" r="3" /><path d="M2 10.500l3.500 3c-2 1.500-4.500-.5-3.500-3z" /></svg>
        <Fit w={8} className="ml-[5.500px] text-[13px] font-bold">9</Fit>
        <svg className="ml-[8px]" width="16" height="16" viewBox="0 0 16 16"><path d="M5.500 1h5v5h-5zM0 11h5.500v5H0zM10.500 11H16v5h-5.500z" fill="#e6e6e6" /><path d="M8 5v3.500M2.500 11V8.500h11V11" stroke="#e6e6e6" strokeWidth="1.300" fill="none" /></svg>
        <svg className="ml-[10px]" width="17" height="14" viewBox="0 0 17 14" fill="none"><path d="M0 4.500h3L8 .5v13l-5-4H0z" fill="#e6e6e6" /><path d="M10 4c1.300 1.500 1.300 4.500 0 6" stroke="#e6e6e6" strokeWidth="1.400" /><path d="M12.500 2c2.500 3 2.500 7 0 10" stroke="#888" strokeWidth="1.400" /></svg>
        <Fit w={205} className="ml-[9px] text-[13px] font-bold">Friday December 29,  7:04:43 PM</Fit>
      </div>
    </div>
  );
}

export default function App() {
  return (
    <div className={`flex h-[1080px] w-[1920px] flex-col overflow-hidden bg-black ${UI}`}>
      <TabStrip />
      <Toolbar />
      <Bookmarks />
      <EditorHeader />
      <Editor />
      <div className="flex h-[24px] items-center border-t border-[#e0e0e0] bg-white pl-[26px] font-['Roboto',sans-serif] text-[13px] text-[#1e1e1e]">Page</div>
      <Taskbar />
    </div>
  );
}
